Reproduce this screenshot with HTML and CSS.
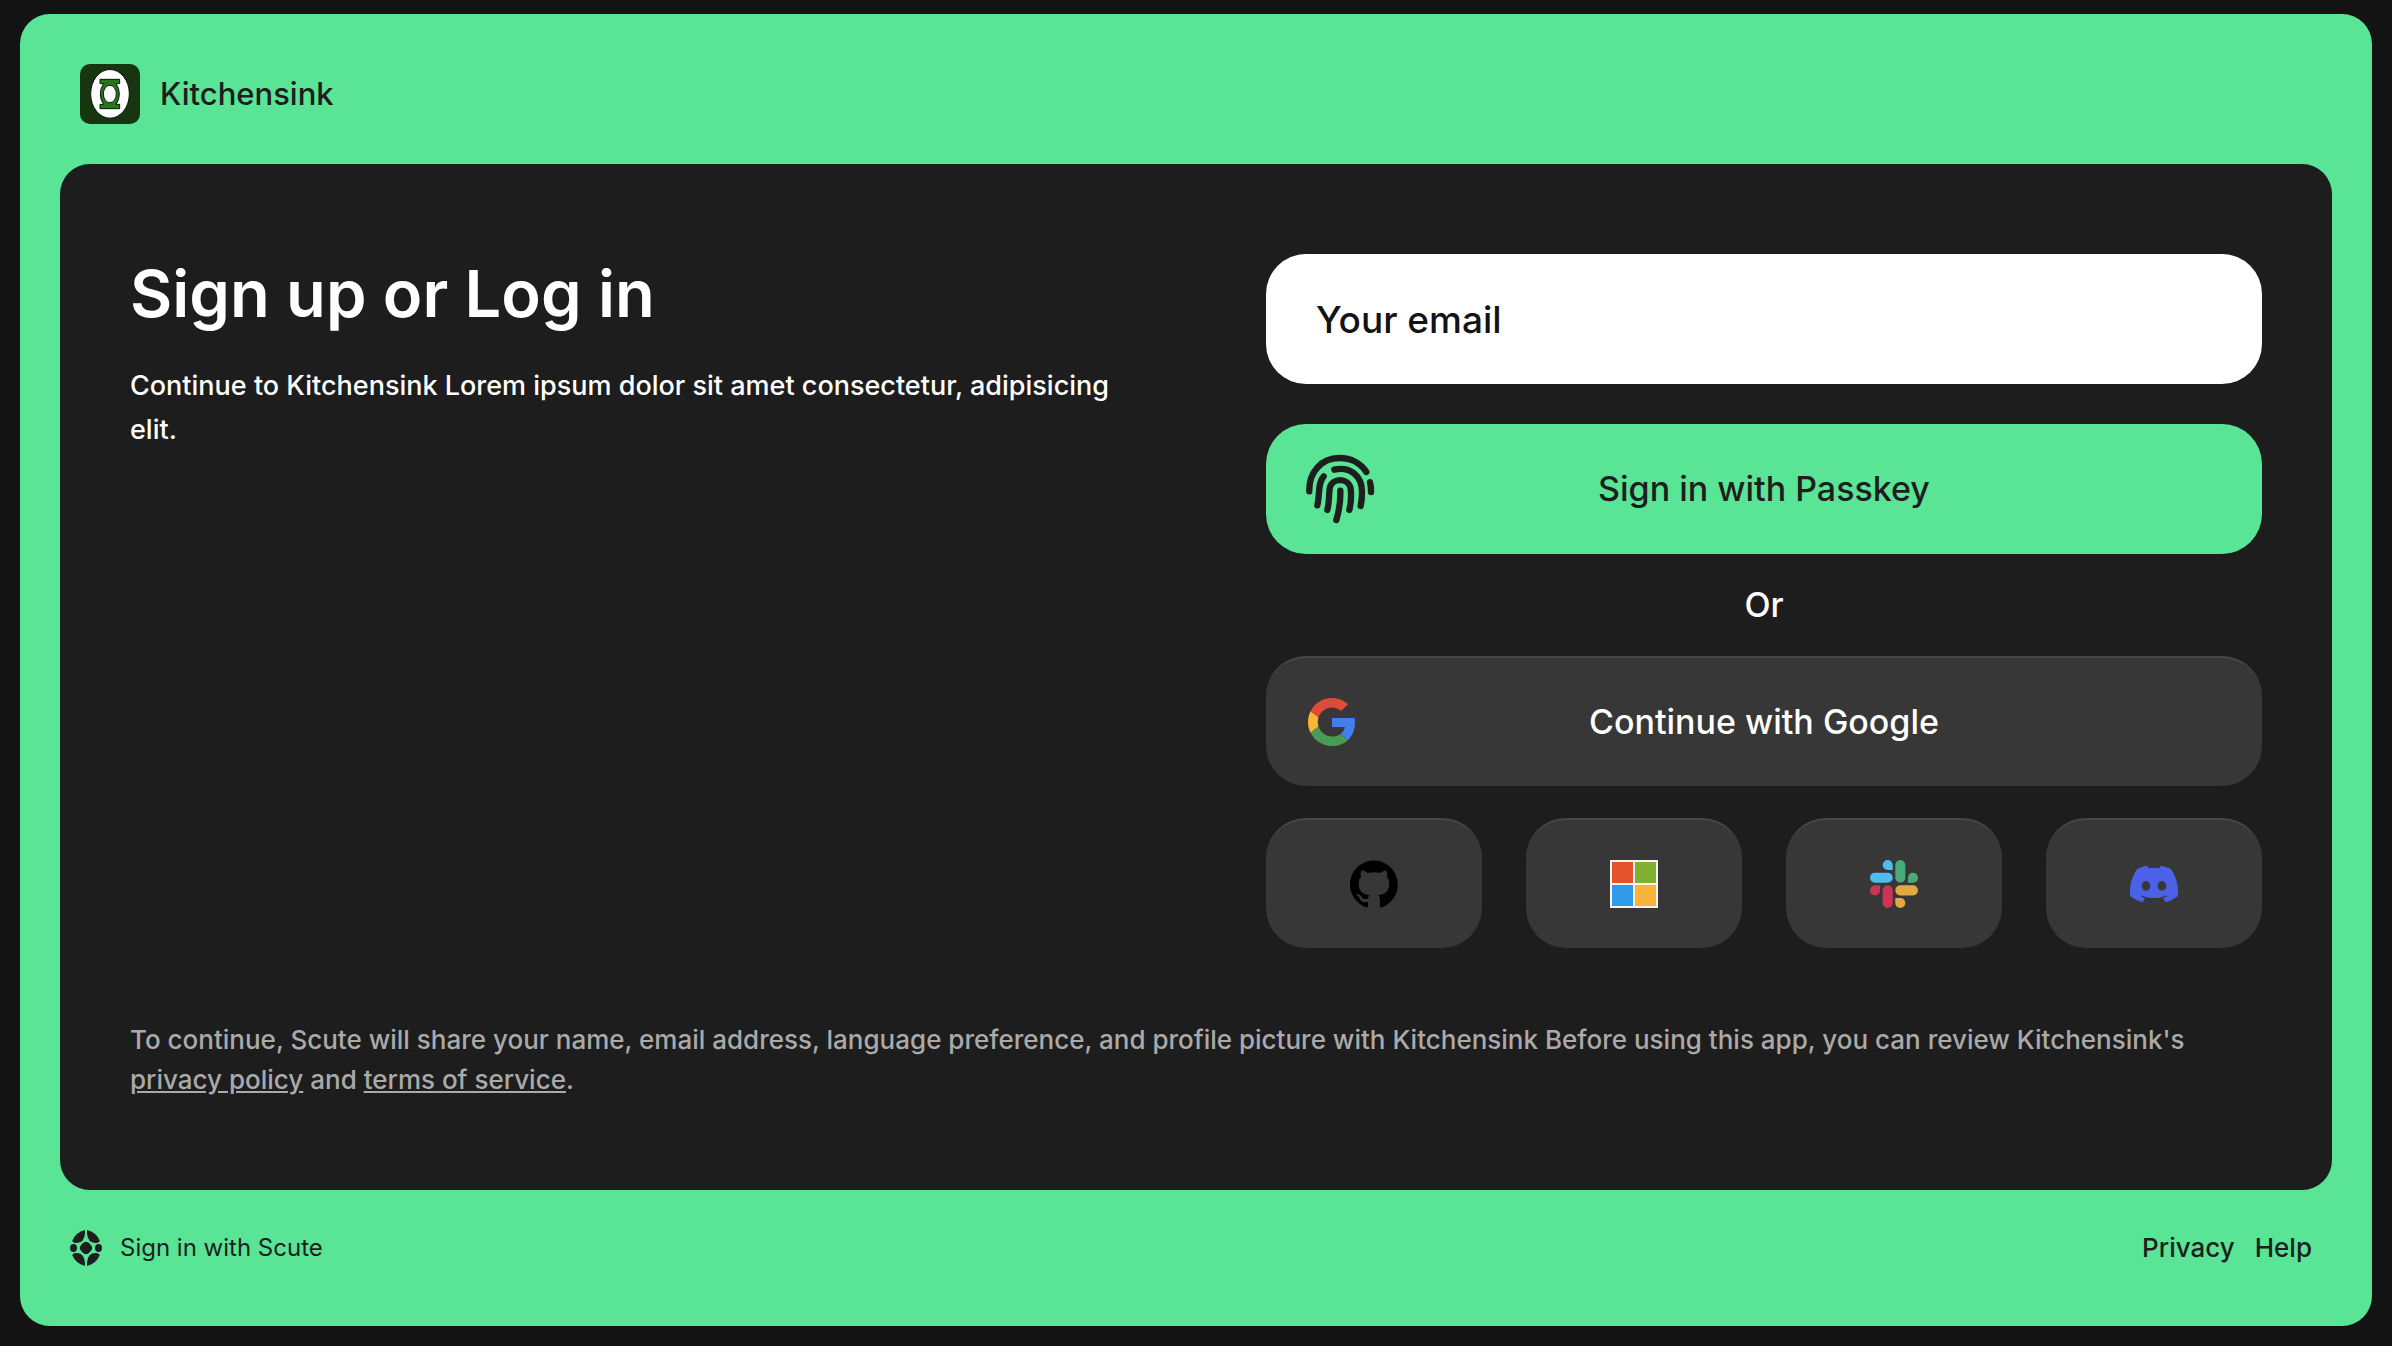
FILE: index.html
```html
<!DOCTYPE html>
<html lang="en">
<head>
<meta charset="utf-8">
<meta name="viewport" content="width=device-width, initial-scale=1">
<title>Sign in – Kitchensink</title>
<link rel="stylesheet" href="styles.css">
</head>
<body>
<div class="shell">
  <header class="app-header">
    <svg class="app-logo" viewBox="0 0 180 180" aria-hidden="true">
      <rect width="180" height="180" fill="#173510"/>
      <ellipse cx="90" cy="89.500" rx="58" ry="73" fill="#fff" stroke="#0c1409" stroke-width="3"/>
      <g fill="#28761c" stroke="#0c1409" stroke-width="3">
        <path d="M60 46H119V59H108Q118 72 118 90Q118 108 108 121H119V134H60V121H71Q61 108 61 90Q61 72 71 59H60Z"/>
        <ellipse cx="89.500" cy="90" rx="19.500" ry="26" fill="#fff"/>
      </g>
    </svg>
    <span class="app-name">Kitchensink</span>
  </header>

  <main class="panel">
    <div class="columns">
      <section class="intro">
        <h1 class="title">Sign up or Log in</h1>
        <p class="lead">Continue to Kitchensink Lorem ipsum dolor sit amet consectetur, adipisicing elit.</p>
      </section>

      <form class="auth">
        <input class="email" type="email" placeholder="Your email" aria-label="Your email">
        <button class="btn btn-passkey" type="button">
          <svg class="icon-passkey" viewBox="47 45 210 210" fill="none" stroke="#1e1e1e" stroke-width="19" stroke-linecap="round" aria-hidden="true">
            <path d="M57 157C55 100 93 57 147 57C182 57 212 73 228 99"/>
            <path d="M239 130Q243 144 242 159"/>
            <path d="M132 92C180 81 215 112 215 158C215 174 214 188 211 201"/>
            <path d="M100 112C82 132 89 164 81 199"/>
            <path d="M111 213C118 187 115 167 118 149C123 115 175 115 181 149C183 167 182 193 177 213"/>
            <path d="M150 155C151 189 146 216 138 243"/>
          </svg>
          <span>Sign in with Passkey</span>
        </button>
        <p class="divider">Or</p>
        <button class="btn btn-dark" type="button">
          <svg class="icon-google" viewBox="0 0 48 48" aria-hidden="true">
            <path fill="#dd4b39" d="M24 9.500c3.540 0 6.710 1.220 9.210 3.600l6.850-6.850C35.900 2.380 30.470 0 24 0 14.620 0 6.510 5.380 2.560 13.220l7.980 6.190C12.430 13.720 17.740 9.500 24 9.500z"/>
            <path fill="#427fed" d="M46.980 24.550c0-1.570-.15-3.090-.38-4.550H24v9.020h12.940c-.58 2.960-2.260 5.480-4.780 7.180l7.730 6c4.510-4.180 7.090-10.360 7.090-17.650z"/>
            <path fill="#f9b636" d="M10.530 28.590c-.48-1.450-.76-2.990-.76-4.590s.27-3.140.76-4.590l-7.980-6.190C.92 16.460 0 20.120 0 24c0 3.880.92 7.540 2.560 10.780l7.970-6.190z"/>
            <path fill="#4a9b53" d="M24 48c6.480 0 11.930-2.130 15.890-5.810l-7.730-6c-2.150 1.450-4.920 2.300-8.160 2.300-6.260 0-11.570-4.220-13.470-9.910l-7.980 6.190C6.510 42.620 14.620 48 24 48z"/>
          </svg>
          <span>Continue with Google</span>
        </button>
        <div class="socials">
          <button class="btn btn-dark" type="button" aria-label="Continue with GitHub">
            <svg class="icon-social" viewBox="0 0 98 96" aria-hidden="true"><path d="M48.854 0C21.839 0 0 22 0 49.217c0 21.756 13.993 40.172 33.405 46.690 2.427.490 3.316-1.059 3.316-2.362 0-1.141-.080-5.052-.080-9.127-13.590 2.934-16.420-5.867-16.420-5.867-2.184-5.704-5.420-7.170-5.420-7.170-4.448-3.015.324-3.015.324-3.015 4.934.326 7.523 5.052 7.523 5.052 4.367 7.496 11.404 5.378 14.235 4.074.404-3.178 1.699-5.378 3.074-6.600-10.839-1.141-22.243-5.378-22.243-24.283 0-5.378 1.940-9.778 5.014-13.200-.485-1.222-2.184-6.275.486-13.038 0 0 4.125-1.304 13.426 5.052a46.970 46.970 0 0 1 12.214-1.630c4.125 0 8.330.571 12.213 1.630 9.302-6.356 13.427-5.052 13.427-5.052 2.670 6.763.970 11.816.485 13.038 3.155 3.422 5.015 7.822 5.015 13.200 0 18.905-11.404 23.060-22.324 24.283 1.780 1.548 3.316 4.481 3.316 9.126 0 6.600-.080 11.897-.080 13.526 0 1.304.890 2.853 3.316 2.364 19.412-6.520 33.405-24.935 33.405-46.691C97.707 22 75.788 0 48.854 0z"/></svg>
          </button>
          <button class="btn btn-dark" type="button" aria-label="Continue with Microsoft">
            <svg class="icon-social" viewBox="0 0 48 48" aria-hidden="true"><path fill="#f5f5f5" d="M0 0h48v48H0z"/><path fill="#e5532d" d="M2 2h21v21H2z"/><path fill="#80b030" d="M25 2h21v21H25z"/><path fill="#2f9be8" d="M2 25h21v21H2z"/><path fill="#fab339" d="M25 25h21v21H25z"/></svg>
          </button>
          <button class="btn btn-dark" type="button" aria-label="Continue with Slack">
            <svg class="icon-social" viewBox="0 0 24 24" aria-hidden="true">
              <path fill="#ce3354" d="M5.042 15.165a2.528 2.528 0 0 1-2.520 2.523A2.528 2.528 0 0 1 0 15.165a2.527 2.527 0 0 1 2.522-2.520h2.520v2.520zM6.313 15.165a2.527 2.527 0 0 1 2.521-2.520 2.527 2.527 0 0 1 2.521 2.520v6.313A2.528 2.528 0 0 1 8.834 24a2.528 2.528 0 0 1-2.521-2.522v-6.313z"/>
              <path fill="#4dbdee" d="M8.834 5.042a2.528 2.528 0 0 1-2.521-2.520A2.528 2.528 0 0 1 8.834 0a2.528 2.528 0 0 1 2.521 2.522v2.520H8.834zM8.834 6.313a2.528 2.528 0 0 1 2.521 2.521 2.528 2.528 0 0 1-2.521 2.521H2.522A2.528 2.528 0 0 1 0 8.834a2.528 2.528 0 0 1 2.522-2.521h6.312z"/>
              <path fill="#49ab79" d="M18.956 8.834a2.528 2.528 0 0 1 2.522-2.521A2.528 2.528 0 0 1 24 8.834a2.528 2.528 0 0 1-2.522 2.521h-2.522V8.834zM17.688 8.834a2.528 2.528 0 0 1-2.523 2.521 2.527 2.527 0 0 1-2.520-2.521V2.522A2.527 2.527 0 0 1 15.165 0a2.528 2.528 0 0 1 2.523 2.522v6.312z"/>
              <path fill="#e4a843" d="M15.165 18.956a2.528 2.528 0 0 1 2.523 2.522A2.528 2.528 0 0 1 15.165 24a2.527 2.527 0 0 1-2.520-2.522v-2.522h2.520zM15.165 17.688a2.527 2.527 0 0 1-2.520-2.523 2.526 2.526 0 0 1 2.520-2.520h6.313A2.527 2.527 0 0 1 24 15.165a2.528 2.528 0 0 1-2.522 2.523h-6.313z"/>
            </svg>
          </button>
          <button class="btn btn-dark" type="button" aria-label="Continue with Discord">
            <svg class="icon-social" viewBox="0 0 24 24" aria-hidden="true"><path fill="#4b62e8" d="M20.317 4.370a19.791 19.791 0 0 0-4.885-1.515.074.074 0 0 0-.079.037c-.210.375-.444.864-.608 1.250a18.270 18.270 0 0 0-5.487 0 12.640 12.640 0 0 0-.617-1.250.077.077 0 0 0-.079-.037A19.736 19.736 0 0 0 3.677 4.370a.070.070 0 0 0-.032.027C.533 9.046-.320 13.580.099 18.057a.082.082 0 0 0 .031.057 19.900 19.900 0 0 0 5.993 3.030.078.078 0 0 0 .084-.028 14.090 14.090 0 0 0 1.226-1.994.076.076 0 0 0-.041-.106 13.107 13.107 0 0 1-1.872-.892.077.077 0 0 1-.008-.128 10.200 10.200 0 0 0 .372-.292.074.074 0 0 1 .077-.010c3.928 1.793 8.180 1.793 12.062 0a.074.074 0 0 1 .078.010c.120.098.246.198.373.292a.077.077 0 0 1-.006.127 12.299 12.299 0 0 1-1.873.892.077.077 0 0 0-.041.107c.360.698.772 1.362 1.225 1.993a.076.076 0 0 0 .084.028 19.839 19.839 0 0 0 6.002-3.030.077.077 0 0 0 .032-.054c.500-5.177-.838-9.674-3.549-13.660a.061.061 0 0 0-.031-.030zM8.020 15.330c-1.183 0-2.157-1.085-2.157-2.419 0-1.333.956-2.419 2.157-2.419 1.210 0 2.176 1.096 2.157 2.420 0 1.333-.956 2.418-2.157 2.418zm7.975 0c-1.183 0-2.157-1.085-2.157-2.419 0-1.333.955-2.419 2.157-2.419 1.210 0 2.176 1.096 2.157 2.420 0 1.333-.946 2.418-2.157 2.418z"/></svg>
          </button>
        </div>
      </form>
    </div>

    <p class="legal">To continue, Scute will share your name, email address, language preference, and profile picture with Kitchensink Before using this app, you can review Kitchensink's <a href="#privacy-policy">privacy policy</a> and <a href="#terms">terms of service</a>.</p>
  </main>

  <footer class="app-footer">
    <a class="scute" href="#scute">
      <svg class="scute-logo" viewBox="0 0 96 108" fill="#1e1e1e" aria-hidden="true">
        <path d="M45 0V10Q43 40 18 39Q8 38 7 32Q17 7 45 0Z"/>
        <path d="M51 0V10Q53 40 78 39Q88 38 89 32Q79 7 51 0Z"/>
        <path d="M45 108V98Q43 68 18 69Q8 70 7 76Q17 101 45 108Z"/>
        <path d="M51 108V98Q53 68 78 69Q88 70 89 76Q79 101 51 108Z"/>
        <ellipse cx="10.500" cy="54" rx="10.500" ry="12"/>
        <ellipse cx="85.500" cy="54" rx="10.500" ry="12"/>
        <path d="M48 35Q54 35 60 42Q67 49 67 54Q67 59 60 66Q54 73 48 73Q42 73 36 66Q29 59 29 54Q29 49 36 42Q42 35 48 35Z"/>
      </svg>
      <span>Sign in with Scute</span>
    </a>
    <nav class="links">
      <a href="#privacy">Privacy</a>
      <a href="#help">Help</a>
    </nav>
  </footer>
</div>
</body>
</html>
```
FILE: styles.css
```css
* {
  box-sizing: border-box;
}

body {
  margin: 0;
  padding: 14px 20px 20px;
  min-height: 100vh;
  display: flex;
  background: #131313;
  color: #fff;
  font-family: Inter, "Liberation Sans", sans-serif;
}

h1,
p {
  margin: 0;
}

a {
  color: inherit;
  text-decoration: none;
}

.shell {
  flex: 1;
  display: flex;
  flex-direction: column;
  padding: 0 40px;
  border-radius: 30px;
  background: #59e496;
}

.app-header {
  display: flex;
  align-items: center;
  gap: 20px;
  padding: 50px 20px 40px;
}

.app-logo {
  width: 60px;
  height: 60px;
  border-radius: 10px;
}

.app-name {
  color: #1e1e1e;
  font-size: 31px;
  line-height: 40px;
  font-weight: 500;
}

.panel {
  flex: 1;
  display: flex;
  flex-direction: column;
  justify-content: space-between;
  gap: 72px;
  padding: 90px 70px;
  border-radius: 30px;
  background: #1d1d1d;
}

.columns {
  display: grid;
  grid-template-columns: 1fr 1fr;
  gap: 140px;
}

.title {
  font-size: 65px;
  line-height: 80px;
  font-weight: 600;
}

.lead {
  margin-top: 30px;
  font-size: 27px;
  line-height: 44px;
  font-weight: 500;
}

.auth {
  display: flex;
  flex-direction: column;
}

.email {
  width: 100%;
  height: 130px;
  padding: 0 50px;
  border: 0;
  border-radius: 40px;
  background: #fff;
  color: #131313;
  font: 500 37px/48px Inter, "Liberation Sans", sans-serif;
}

.email::placeholder {
  color: #131313;
  opacity: 1;
}

.btn {
  display: grid;
  grid-template-columns: 1fr auto 1fr;
  align-items: center;
  width: 100%;
  height: 130px;
  padding: 0 40px;
  border: 0;
  border-radius: 40px;
  font: 500 34px/48px Inter, "Liberation Sans", sans-serif;
}

.btn-passkey {
  margin-top: 40px;
  background: #59e496;
  color: #1e1e1e;
}

.btn-dark {
  border-top: 2px solid #474747;
  background: #373737;
  color: #fff;
}

.icon-passkey {
  width: 70px;
  height: 70px;
}

.icon-google {
  width: 48px;
  height: 48px;
  margin-left: 2px;
}

.divider {
  padding: 27px 0;
  font-size: 34px;
  line-height: 48px;
  font-weight: 500;
  text-align: center;
}

.socials {
  display: grid;
  grid-template-columns: repeat(4, 1fr);
  gap: 44px;
  margin-top: 32px;
}

.socials .btn {
  display: flex;
  justify-content: center;
}

.icon-social {
  width: 48px;
  height: 48px;
}

.legal {
  color: #aaa;
  font-size: 26px;
  line-height: 40px;
  font-weight: 500;
}

.legal a {
  text-decoration: underline;
}

.app-footer {
  display: flex;
  align-items: center;
  justify-content: space-between;
  padding: 38px 20px 58px 10px;
  color: #1e1e1e;
  line-height: 40px;
}

.scute {
  display: flex;
  align-items: center;
  gap: 18px;
  font-size: 24px;
}

.scute-logo {
  width: 32px;
  height: 36px;
}

.links {
  display: flex;
  gap: 20px;
  font-size: 26px;
  font-weight: 500;
}
```
